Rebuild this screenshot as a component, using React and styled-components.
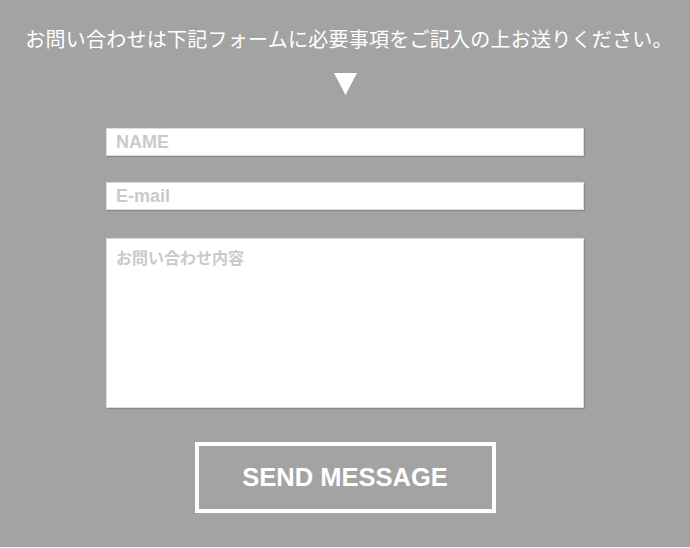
import styled, { createGlobalStyle } from 'styled-components';

const GlobalStyle = createGlobalStyle`
  html, body {
    margin: 0;
    padding: 0;
    background: #f2f2f2;
  }
  * {
    box-sizing: border-box;
  }
`;

const Section = styled.section`
  height: 547px;
  background-color: #a3a3a3;
  display: flex;
  flex-direction: column;
  align-items: center;
  padding-top: 28px;
  font-family: "Liberation Sans", "Noto Sans CJK JP", sans-serif;
`;

const Lead = styled.p`
  margin: 0;
  padding-left: 8px;
  color: #fff;
  font-family: "Noto Sans CJK JP", sans-serif;
  font-size: 20px;
  line-height: 22px;
  letter-spacing: 0.25px;
`;

const Arrow = styled.svg`
  display: block;
  margin-top: 23px;
  margin-left: 1px;
`;

const Form = styled.form`
  width: 478px;
  margin-top: 33px;
  display: flex;
  flex-direction: column;
  align-items: center;
`;

const fieldStyle = `
  width: 100%;
  border: 1px solid #dcdcdc;
  border-radius: 0;
  background: #fff;
  box-shadow: 1px 1px 1px rgba(0, 0, 0, 0.15);
  outline: none;
  color: #555;
  font-family: "Liberation Sans", "Noto Sans CJK JP", sans-serif;
  font-weight: bold;
  padding: 0 9px;
  &::placeholder {
    color: #cacaca;
    opacity: 1;
  }
`;

const Input = styled.input`
  ${fieldStyle}
  height: 28px;
  font-size: 18px;
  margin-bottom: ${props => props.$gap}px;
`;

const Message = styled.textarea`
  ${fieldStyle}
  height: 170px;
  resize: none;
  font-size: 16px;
  line-height: 20px;
  padding-top: 8px;
  font-family: "Noto Sans CJK JP", sans-serif;
`;

const SendButton = styled.button`
  margin-top: 34px;
  width: 301px;
  height: 71px;
  border: 4px solid #fff;
  background: transparent;
  color: #fff;
  font-family: "Liberation Sans", sans-serif;
  font-weight: bold;
  font-size: 25.5px;
  letter-spacing: 0;
  cursor: pointer;
`;

const App = () => {
  return (
    <>
      <GlobalStyle />
      <Section>
        <Lead>お問い合わせは下記フォームに必要事項をご記入の上お送りください。</Lead>
        <Arrow width="23" height="22" viewBox="0 0 23 22">
          <polygon points="0,0 23,0 11.5,22" fill="#fff" />
        </Arrow>
        <Form onSubmit={e => e.preventDefault()}>
          <Input type="text" placeholder="NAME" $gap={26} />
          <Input type="email" placeholder="E-mail" $gap={28} />
          <Message placeholder="お問い合わせ内容" />
          <SendButton type="submit">SEND MESSAGE</SendButton>
        </Form>
      </Section>
    </>
  );
};

export default App;
